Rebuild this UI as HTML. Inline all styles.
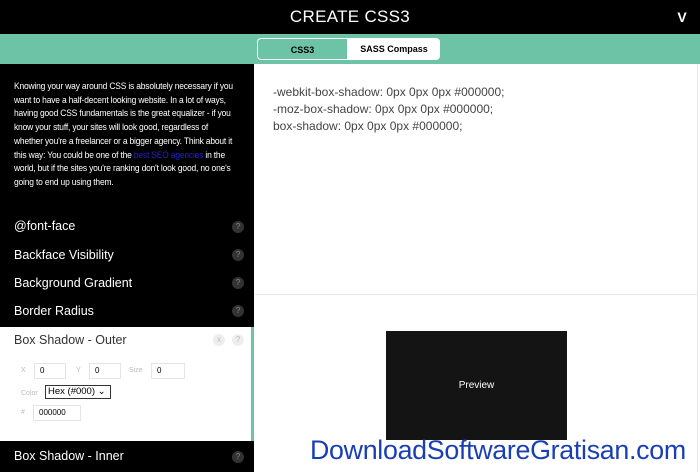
<!DOCTYPE html>
<html><head><style>
*{margin:0;padding:0;box-sizing:border-box}
body{width:700px;height:472px;overflow:hidden;background:#fff;font-family:"Liberation Sans",sans-serif;position:relative}
.hdr{position:absolute;left:0;top:0;width:700px;height:34px;background:#000;color:#fff;text-align:center;font-size:17px;line-height:34px;letter-spacing:0.3px}
.hdr .v{position:absolute;right:13px;top:0;font-size:14px;font-weight:bold}
.bar{position:absolute;left:0;top:34px;width:700px;height:30px;background:#6cc3a5}
.tab{position:absolute;top:4px;height:22px;font-size:9px;font-weight:bold;line-height:22px;text-align:center}
.t1{left:257px;width:91px;background:#6cc3a5;border:1px solid #fff;border-radius:4px 0 0 4px;color:#000}
.t2{left:348px;width:92px;background:#fff;border-radius:0 4px 4px 0}
.left{position:absolute;left:0;top:64px;width:254px;height:408px;background:#000}
.para{position:absolute;left:14px;top:80px;white-space:nowrap;color:#fff;font-size:9.3px;line-height:13.7px;letter-spacing:-0.2px;transform:scaleX(0.91);transform-origin:0 0}
.para a{color:#2222cc}
.item{position:absolute;left:14px;color:#fff;font-size:12.5px}
.q{position:absolute;left:232px;width:12px;height:12px;border-radius:50%;background:#333;color:#888;font-size:8px;text-align:center;line-height:12px}
.open{position:absolute;left:0;top:327px;width:254px;height:114px;background:#fff;border-right:3px solid #6cc3a5}
.lbl{position:absolute;color:#bbb;font-size:7px}
.inp{position:absolute;height:16px;border:1px solid #e4e4e4;font-size:8px;padding-left:5px;line-height:14px}
.code{position:absolute;left:273px;top:84px;font-size:12px;line-height:17px;color:#444}
.hr{position:absolute;left:255px;top:294px;width:442px;height:1px;background:#e8e8e8}
.rb{position:absolute;left:697px;top:64px;width:1px;height:408px;background:#e8e8e8}
.prev{position:absolute;left:386px;top:331px;width:181px;height:109px;background:#141414;color:#fff;font-size:10px;text-align:center;line-height:109px}
.wm{position:absolute;left:310px;top:435px;font-size:26.8px;color:#1a3fb5;letter-spacing:-0.3px}
</style></head><body>
<div class="hdr">CREATE CSS3<span class="v">V</span></div>
<div class="bar"><div class="tab t1">CSS3</div><div class="tab t2">SASS Compass</div></div>
<div class="left"></div>
<div class="para">Knowing your way around CSS is absolutely necessary if you<br>want to have a half-decent looking website. In a lot of ways,<br>having good CSS fundamentals is the great equalizer - if you<br>know your stuff, your sites will look good, regardless of<br>whether you're a freelancer or a bigger agency. Think about it<br>this way: You could be one of the <a>best SEO agencies</a> in the<br>world, but if the sites you're ranking don't look good, no one's<br>going to end up using them.</div>
<div class="item" style="top:219px">@font-face</div><div class="q" style="top:221px">?</div>
<div class="item" style="top:248px">Backface Visibility</div><div class="q" style="top:249px">?</div>
<div class="item" style="top:276px">Background Gradient</div><div class="q" style="top:277px">?</div>
<div class="item" style="top:304px">Border Radius</div><div class="q" style="top:305px">?</div>
<div class="open">
<div class="item" style="top:6px;color:#333">Box Shadow - Outer</div>
<div class="q" style="left:213px;top:7px;background:#eee;color:#bbb">x</div>
<div class="q" style="top:7px;background:#eee;color:#bbb">?</div>
<div class="lbl" style="left:21px;top:40px">X</div><div class="inp" style="left:34px;top:36px;width:32px">0</div>
<div class="lbl" style="left:76px;top:40px">Y</div><div class="inp" style="left:89px;top:36px;width:32px">0</div>
<div class="lbl" style="left:129px;top:40px">Size</div><div class="inp" style="left:151px;top:36px;width:34px">0</div>
<div class="lbl" style="left:21px;top:63px">Color</div>
<div class="inp" style="left:45px;top:58px;width:66px;height:14px;border-color:#333;font-size:9.5px;line-height:12px;padding-left:2px">Hex (#000) ⌄</div>
<div class="lbl" style="left:21px;top:82px">#</div><div class="inp" style="left:33px;top:78px;width:48px">000000</div>
</div>
<div class="item" style="top:449px">Box Shadow - Inner</div><div class="q" style="top:451px">?</div>
<div class="code">-webkit-box-shadow: 0px 0px 0px #000000;<br>-moz-box-shadow: 0px 0px 0px #000000;<br>box-shadow: 0px 0px 0px #000000;</div>
<div class="hr"></div><div class="rb"></div>
<div class="prev">Preview</div>
<div class="wm">DownloadSoftwareGratisan.com</div>
</body></html>
